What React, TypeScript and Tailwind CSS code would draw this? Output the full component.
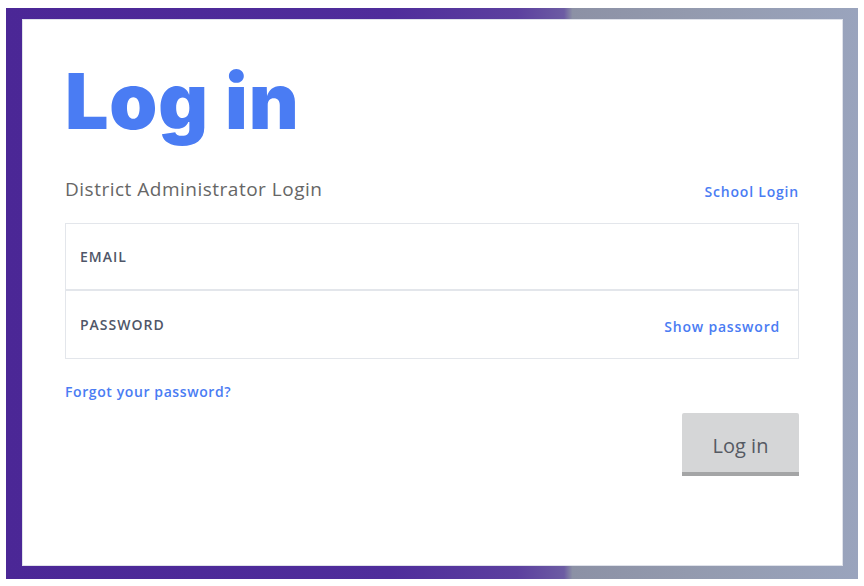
export default function App() {
  return (
    <div className="min-h-[586px] w-[864px] bg-white pl-[6px] pt-[8px]">
      <div className="w-[852px] h-[571px] pl-[16px] pt-[11px] bg-[linear-gradient(90deg,#4b2796_0%,#4f2d9b_45%,#5c409f_60%,#6c5ca3_65.5%,#8c91a5_66.5%,#939aae_80%,#9aa4bd_100%)]">
        <div className="w-[821px] h-[547px] bg-white border border-[#dfe2ea] pl-[42px] pr-[43px] pt-[36px] font-['Open_Sans',sans-serif]">
          <h1 className="text-[77px] leading-[90px] font-black text-[#4a7cf3] font-['Inter',sans-serif] tracking-[0.8px]">
            Log in
          </h1>
          <div className="mt-[31px] flex items-end justify-between">
            <span className="text-[19px] text-[#666] leading-[24px] tracking-[0.5px]">District Administrator Login</span>
            <a className="text-[14px] font-semibold text-[#4a7cf3] leading-[18px] tracking-[0.8px]">School Login</a>
          </div>
          <div className="mt-[22px] border border-[#e3e6eb]">
            <div className="h-[67px] flex items-center px-[14px] border-b-2 border-[#e3e6eb]">
              <span className="text-[14px] font-semibold text-[#4f5668] tracking-[1px]">EMAIL</span>
            </div>
            <div className="h-[67px] flex items-center justify-between pl-[14px] pr-[18px]">
              <span className="text-[14px] font-semibold text-[#4f5668] tracking-[1px]">PASSWORD</span>
              <a className="text-[14px] font-semibold text-[#4a7cf3] mt-[3px] tracking-[0.8px]">Show password</a>
            </div>
          </div>
          <div className="mt-[20px]">
            <a className="text-[14px] font-semibold text-[#4a7cf3] tracking-[0.6px]">Forgot your password?</a>
          </div>
          <div className="flex justify-end mt-[10px]">
            <button className="w-[117px] h-[63px] bg-[#d5d6d7] border-b-4 border-[#a4a5a6] rounded-t-[2px] text-[20px] text-[#555a63] pt-[7px]">
              Log in
            </button>
          </div>
        </div>
      </div>
    </div>
  );
}
